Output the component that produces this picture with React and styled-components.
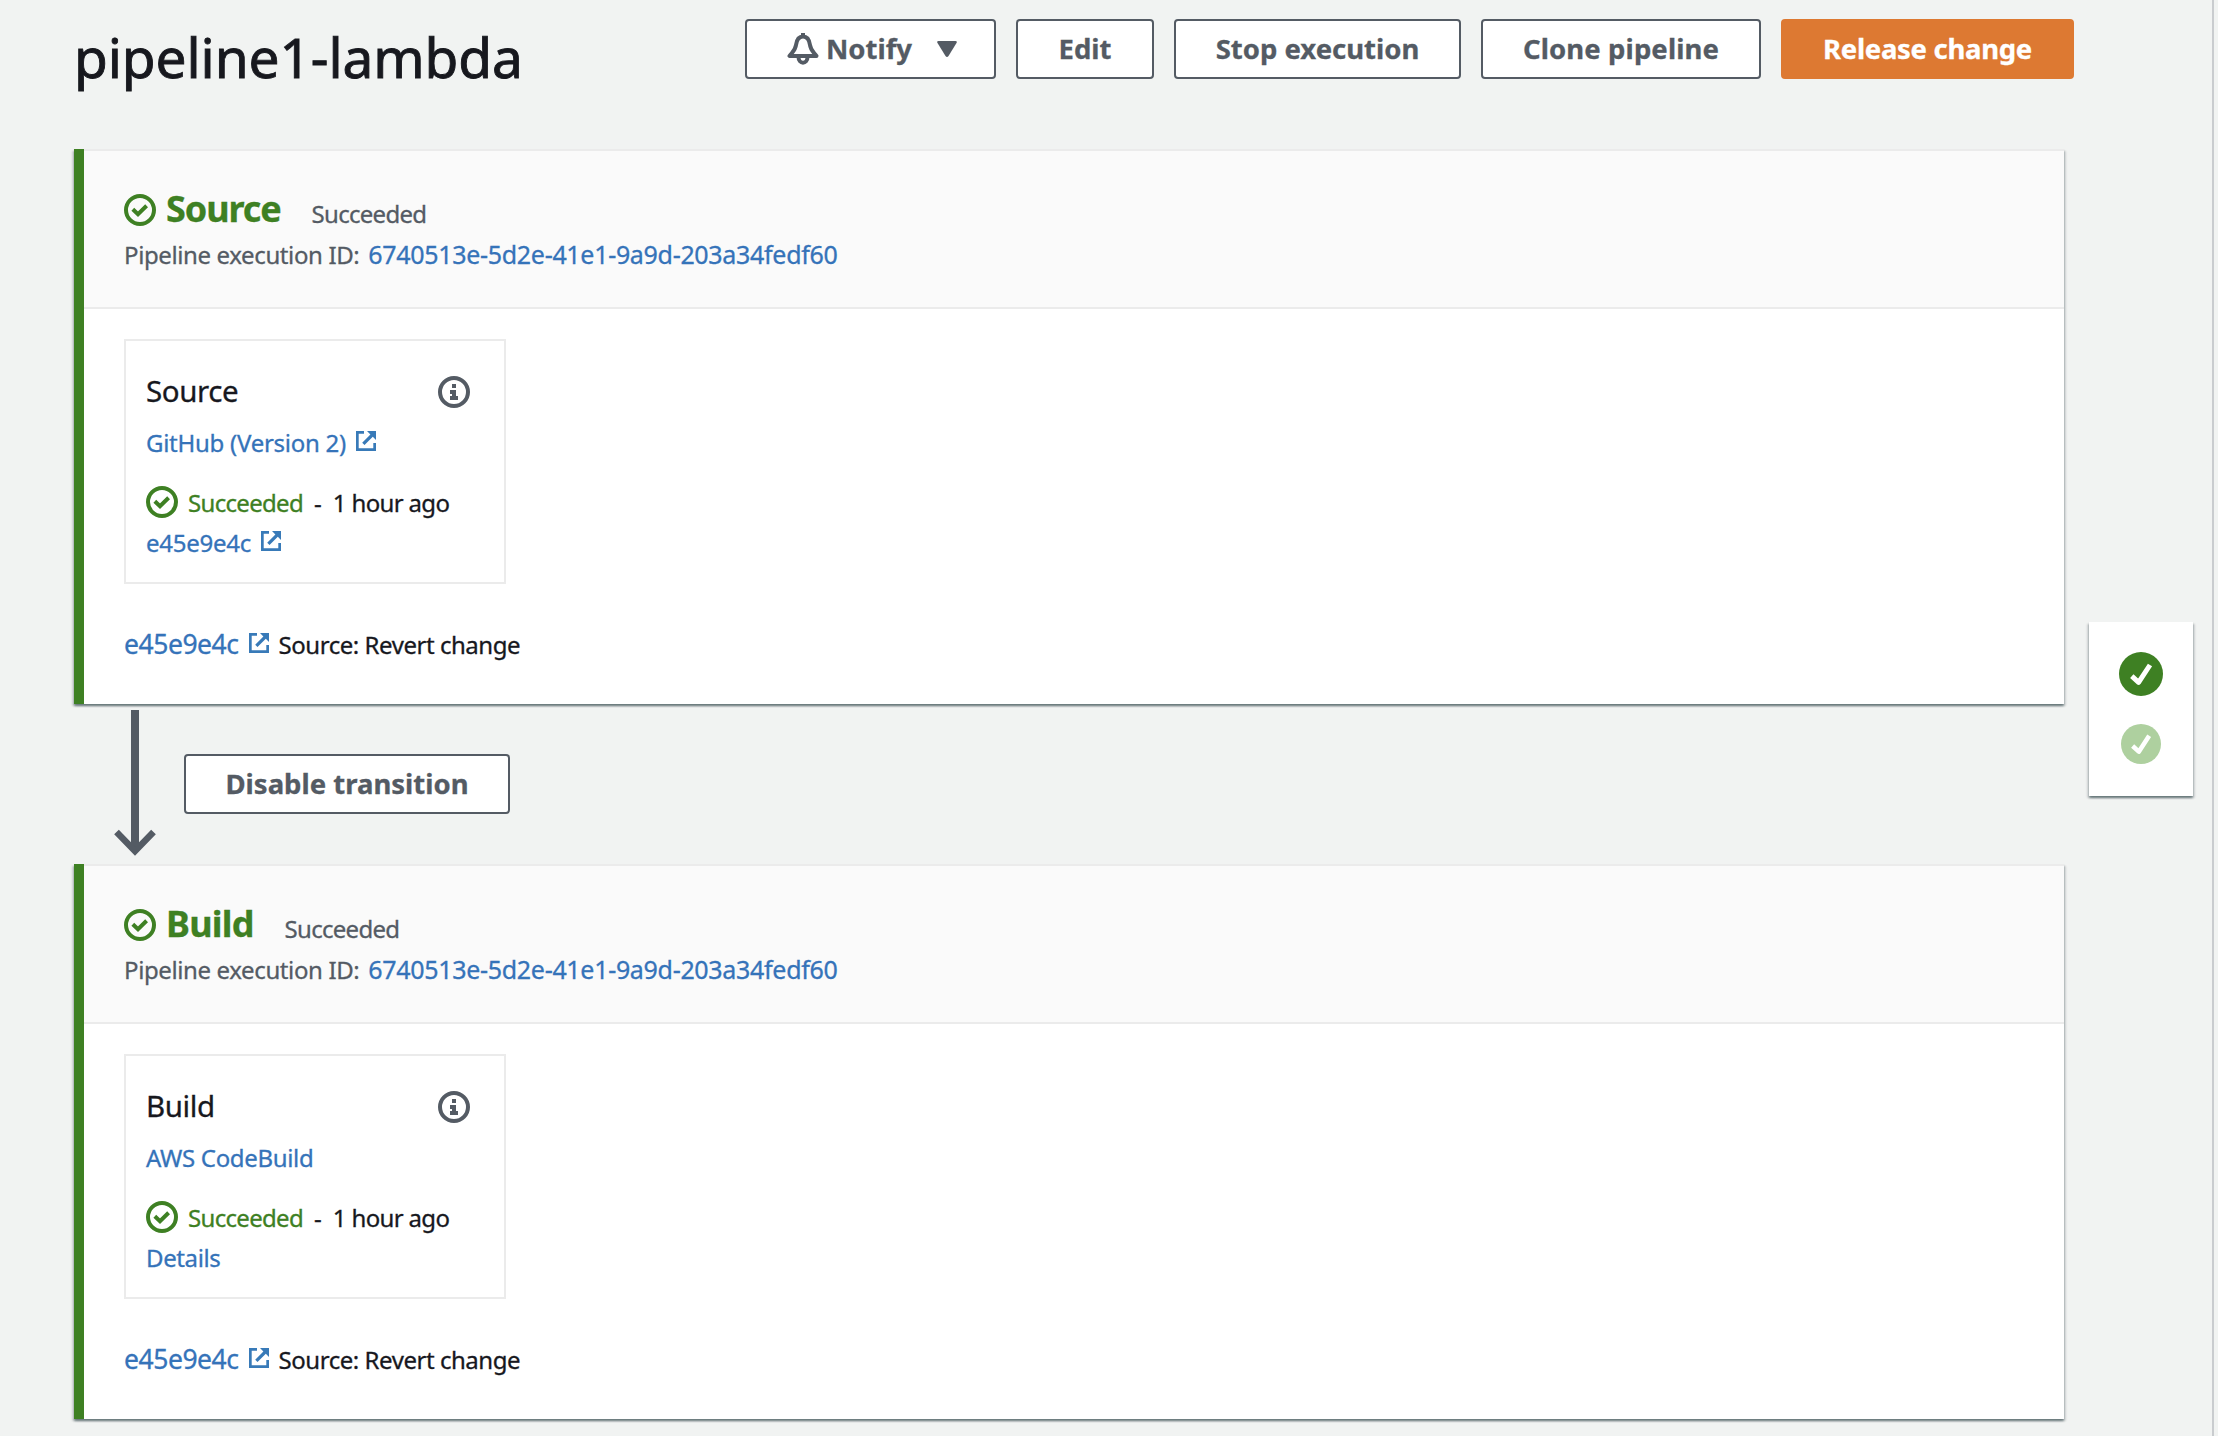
import React from "react";
import styled, { createGlobalStyle } from "styled-components";

const c = {
  page: "#f1f3f2",
  green: "#3e8023",
  paleGreen: "#aed09f",
  ink: "#17181e",
  grey: "#545b64",
  link: "#3573b9",
  line: "#ebebeb",
  orange: "#dd7932",
};

const GlobalStyle = createGlobalStyle`
  *, *::before, *::after { box-sizing: border-box; }
  html, body { margin: 0; padding: 0; height: 1436px; overflow: hidden; }
  body {
    background: ${c.page};
    color: ${c.ink};
    font-family: "Noto Sans", "Open Sans", sans-serif;
    font-size: 24px;
    line-height: 40px;
    -webkit-text-stroke: 0.3px currentColor;
  }
`;

const Page = styled.div`
  display: flex;
  width: 2218px;
  height: 1436px;
`;

const Main = styled.main`
  display: flex;
  flex-direction: column;
  flex: none;
  width: 2074px;
  padding-left: 74px;
`;

const TopBar = styled.header`
  display: flex;
  justify-content: space-between;
  height: 149px;
  padding-top: 19px;
`;

const Title = styled.h1`
  margin: -2px 0 0;
  font-size: 55px;
  font-weight: 400;
  line-height: 80px;
  letter-spacing: -0.1px;
  white-space: nowrap;
  -webkit-text-stroke: 0.9px currentColor;
`;

const Actions = styled.div`
  display: flex;
  gap: 20px;
`;

const Button = styled.button`
  display: flex;
  align-items: center;
  justify-content: center;
  width: ${(p) => p.$width}px;
  height: 60px;
  padding: 0;
  border: 2px solid ${(p) => (p.$primary ? c.orange : c.grey)};
  border-radius: 4px;
  background: ${(p) => (p.$primary ? c.orange : "#fff")};
  color: ${(p) => (p.$primary ? "#fff" : c.grey)};
  font: 700 27.5px/40px "Noto Sans", "Open Sans", sans-serif;
  letter-spacing: ${(p) => p.$tracking ?? 0}px;
  white-space: nowrap;
`;

const BellSlot = styled.span`
  display: flex;
  margin: 0 7px 0 3px;
`;

const CaretSlot = styled.span`
  display: flex;
  margin-left: 25px;
`;

const Stage = styled.section`
  display: flex;
  flex-direction: column;
  width: 1990px;
  height: 555px;
  border-left: 10px solid ${c.green};
  background: #fff;
  box-shadow: 0 2px 2px 0 rgba(0, 28, 36, 0.45), 2px 2px 2px 0 rgba(0, 28, 36, 0.12), -2px 2px 2px 0 rgba(0, 28, 36, 0.12);
`;

const StageHeader = styled.div`
  height: 160px;
  flex: none;
  padding: 37px 40px 0;
  border-top: 2px solid ${c.line};
  border-bottom: 2px solid ${c.line};
  background: #fafafa;
`;

const StageTitleRow = styled.div`
  display: flex;
  align-items: center;
  height: 44px;
`;

const StageName = styled.h2`
  margin: -2px 31px 0 10px;
  color: ${c.green};
  font-size: 36px;
  font-weight: 700;
  line-height: 44px;
  letter-spacing: ${(p) => p.$tracking}px;
`;

const StageStatus = styled.span`
  padding-top: 7px;
  color: ${c.grey};
  letter-spacing: -0.72px;
`;

const ExecutionRow = styled.div`
  display: flex;
  gap: 9px;
  height: 38px;
  margin-top: 3px;
  color: ${c.grey};
  line-height: 38px;
`;

const ExecutionLabel = styled.span`
  padding-top: 1px;
  letter-spacing: -0.38px;
`;

const Link = styled.a`
  padding-top: ${(p) => (p.$size ? 0 : 2)}px;
  color: ${c.link};
  font-size: ${(p) => p.$size ?? 24}px;
  letter-spacing: ${(p) => p.$tracking}px;
  white-space: nowrap;
`;

const StageBody = styled.div`
  display: flex;
  flex-direction: column;
  align-items: flex-start;
  padding: 30px 40px 0;
`;

const ActionCard = styled.article`
  display: flex;
  flex-direction: column;
  width: 382px;
  height: 245px;
  padding: 30px 34px 0 20px;
  border: 2px solid ${c.line};
`;

const CardHead = styled.div`
  display: flex;
  align-items: center;
  justify-content: space-between;
  height: 42px;
`;

const CardTitle = styled.h3`
  margin: -2px 0 0;
  font-size: 29.5px;
  font-weight: 400;
  line-height: 42px;
  letter-spacing: -0.4px;
`;

const Line = styled.div`
  display: flex;
  align-items: center;
  height: 40px;
  margin-top: ${(p) => p.$top ?? 0}px;
  white-space: nowrap;
`;

const IconAfter = styled.span`
  display: flex;
  margin: 0 10px 2px;
`;

const StatusText = styled.span`
  padding-top: 2px;
  margin-left: 10px;
  color: ${c.green};
  letter-spacing: -0.68px;
`;

const Dash = styled.span`
  padding-top: 2px;
  margin: 0 11px 0 11px;
`;

const Plain = styled.span`
  padding-top: 2px;
  letter-spacing: ${(p) => p.$tracking}px;
`;

const Transition = styled.div`
  display: flex;
  height: 160px;
  padding: 6px 0 0 40px;
`;

const TransitionButton = styled.div`
  padding: 44px 0 0 28px;
`;

const Rail = styled.aside`
  display: flex;
  align-items: flex-start;
  width: 139px;
  margin-left: 1px;
  padding: 622px 0 0 14px;
  border-right: 2px solid #c9cccf;
`;

const RailCard = styled.div`
  display: flex;
  flex-direction: column;
  align-items: center;
  gap: 28px;
  width: 104px;
  height: 174px;
  padding-top: 30px;
  background: #fff;
  box-shadow: 0 2px 2px 0 rgba(0, 28, 36, 0.45), 2px 2px 2px 0 rgba(0, 28, 36, 0.12), -2px 2px 2px 0 rgba(0, 28, 36, 0.12);
`;

const CheckIcon = () => (
  <svg width="32" height="32" viewBox="0 0 32 32" fill="none" stroke={c.green} strokeWidth="4">
    <circle cx="16" cy="16" r="14" />
    <path d="M8.8 15.2 14 20.2 22.6 11.8" />
  </svg>
);

const InfoIcon = () => (
  <svg width="32" height="32" viewBox="0 0 32 32" fill="none">
    <circle cx="16" cy="16" r="14" stroke={c.grey} strokeWidth="4" />
    <path d="M14 8h4v4h-4zM12 14h6v6h2v4h-8v-4h2v-2h-2z" fill={c.grey} />
  </svg>
);

const ExternalIcon = () => (
  <svg width="20" height="20" viewBox="0 0 20 20" fill="#387ab8">
    <path d="M0 0H8V2.700H2.700V17.300H17.300V12H20V20H0Z" />
    <path d="M11 0H20V9L16.800 5.800 8.500 14 6.200 11.700 14.400 3.400Z" />
  </svg>
);

const BellIcon = () => (
  <svg width="32" height="32" viewBox="0 0 32 32" fill="none" stroke={c.grey} strokeWidth="4" strokeLinejoin="round">
    <path d="M16 0V4" />
    <path d="M16 3.500C11.500 3.500 9.600 7.400 9 12 8.400 17 6 18.500 2.500 23H29.500C26 18.500 23.600 17 23 12 22.400 7.400 20.500 3.500 16 3.500Z" />
    <path d="M11.500 24C11.500 31.500 20.500 31.500 20.500 24" />
  </svg>
);

const CaretIcon = () => (
  <svg width="20" height="16" viewBox="0 0 20 16" fill={c.grey}>
    <path d="M1.500 0H18.500Q20.500 0 19.500 2L11.500 15Q10 17 8.500 15L.500 2Q-.500 0 1.500 0Z" />
  </svg>
);

const ArrowIcon = () => (
  <svg width="42" height="147" viewBox="0 0 42 147" fill="none" stroke={c.grey}>
    <path d="M21 0V140" strokeWidth="8" />
    <path d="M2.500 122 21 141 39.500 122" strokeWidth="6.500" />
  </svg>
);

const RoundCheck = ({ size, color }) => (
  <svg width={size} height={size} viewBox="0 0 44 44" fill="none">
    <circle cx="22" cy="22" r="22" fill={color} />
    <path d="M12.800 24.200 19.600 30.400 31 13" stroke="#fff" strokeWidth="5" strokeLinejoin="round" />
  </svg>
);

const stages = [
  {
    name: "Source",
    nameTracking: -1.1,
    provider: "GitHub (Version 2)",
    providerTracking: -0.27,
    external: true,
    detail: "e45e9e4c",
    detailTracking: -0.25,
  },
  {
    name: "Build",
    nameTracking: -0.8,
    provider: "AWS CodeBuild",
    providerTracking: -0.33,
    external: false,
    detail: "Details",
    detailTracking: -0.38,
  },
];

const StagePanel = ({ stage }) => (
  <Stage>
    <StageHeader>
      <StageTitleRow>
        <CheckIcon />
        <StageName $tracking={stage.nameTracking}>{stage.name}</StageName>
        <StageStatus>Succeeded</StageStatus>
      </StageTitleRow>
      <ExecutionRow>
        <ExecutionLabel>Pipeline execution ID:</ExecutionLabel>
        <Link $size={25} $tracking={-0.31}>6740513e-5d2e-41e1-9a9d-203a34fedf60</Link>
      </ExecutionRow>
    </StageHeader>
    <StageBody>
      <ActionCard>
        <CardHead>
          <CardTitle>{stage.name}</CardTitle>
          <InfoIcon />
        </CardHead>
        <Line $top={9}>
          <Link $tracking={stage.providerTracking}>{stage.provider}</Link>
          {stage.external && <IconAfter><ExternalIcon /></IconAfter>}
        </Line>
        <Line $top={20}>
          <CheckIcon />
          <StatusText>Succeeded</StatusText>
          <Dash>-</Dash>
          <Plain $tracking={-0.65}>1 hour ago</Plain>
        </Line>
        <Line>
          <Link $tracking={stage.detailTracking}>{stage.detail}</Link>
          {stage.external && <IconAfter><ExternalIcon /></IconAfter>}
        </Line>
      </ActionCard>
      <Line $top={40}>
        <Link $size={26.5} $tracking={-0.45}>e45e9e4c</Link>
        <IconAfter><ExternalIcon /></IconAfter>
        <Plain $tracking={-0.46}>Source: Revert change</Plain>
      </Line>
    </StageBody>
  </Stage>
);

export default function App() {
  return (
    <>
      <GlobalStyle />
      <Page>
        <Main>
          <TopBar>
            <Title>pipeline1-lambda</Title>
            <Actions>
              <Button $width={251}>
                <BellSlot><BellIcon /></BellSlot>
                Notify
                <CaretSlot><CaretIcon /></CaretSlot>
              </Button>
              <Button $width={138}>Edit</Button>
              <Button $width={287}>Stop execution</Button>
              <Button $width={280} $tracking={0.1}>Clone pipeline</Button>
              <Button $width={293} $primary $tracking={-0.3}>Release change</Button>
            </Actions>
          </TopBar>
          <StagePanel stage={stages[0]} />
          <Transition>
            <ArrowIcon />
            <TransitionButton>
              <Button $width={326}>Disable transition</Button>
            </TransitionButton>
          </Transition>
          <StagePanel stage={stages[1]} />
        </Main>
        <Rail>
          <RailCard>
            <RoundCheck size={44} color={c.green} />
            <RoundCheck size={40} color={c.paleGreen} />
          </RailCard>
        </Rail>
      </Page>
    </>
  );
}
